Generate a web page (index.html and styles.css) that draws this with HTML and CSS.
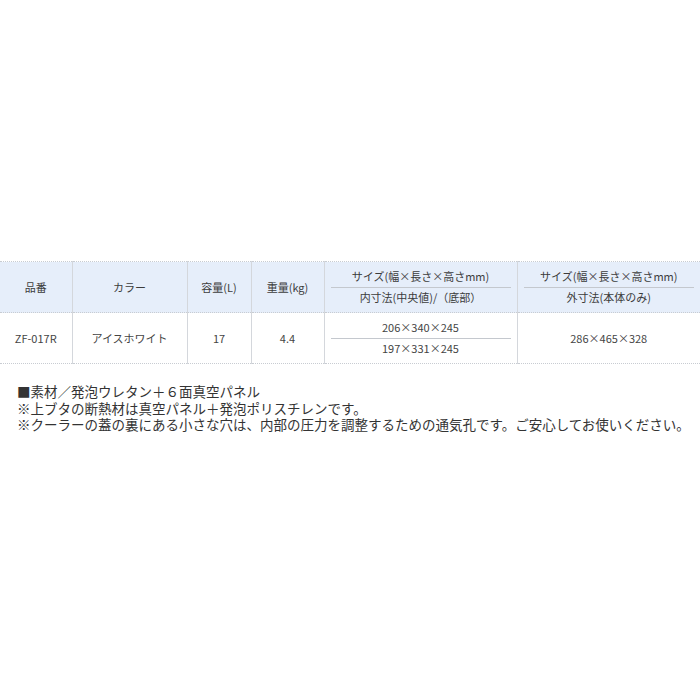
FILE: index.html
```html
<!DOCTYPE html>
<html lang="ja">
<head>
<meta charset="utf-8">
<link rel="stylesheet" href="styles.css">
</head>
<body>
<div class="page">
  <table class="spec">
    <colgroup>
      <col class="c1"><col class="c2"><col class="c3"><col class="c4"><col class="c5"><col class="c6">
    </colgroup>
    <thead>
      <tr>
        <th>品番</th>
        <th>カラー</th>
        <th>容量(L)</th>
        <th>重量(kg)</th>
        <th class="split"><div class="part">サイズ(幅×長さ×高さmm)</div><div class="part second">内寸法(中央値)/（底部）</div></th>
        <th class="split last"><div class="part">サイズ(幅×長さ×高さmm)</div><div class="part second">外寸法(本体のみ)</div></th>
      </tr>
    </thead>
    <tbody>
      <tr>
        <td>ZF-017R</td>
        <td>アイスホワイト</td>
        <td>17</td>
        <td>4.4</td>
        <td class="split"><div class="part">206×340×245</div><div class="part second">197×331×245</div></td>
        <td class="last">286×465×328</td>
      </tr>
    </tbody>
  </table>
  <div class="notes">
    <p>■素材／発泡ウレタン＋６面真空パネル</p>
    <p>※上ブタの断熱材は真空パネル＋発泡ポリスチレンです。</p>
    <p>※クーラーの蓋の裏にある小さな穴は、内部の圧力を調整するための通気孔です。ご安心してお使いください。</p>
  </div>
</div>
</body>
</html>
```
FILE: styles.css
```css
html, body {
  margin: 0;
  padding: 0;
  background: #ffffff;
}
body {
  font-family: "Noto Sans CJK JP", "Noto Sans", sans-serif;
  color: #444444;
}
.page {
  width: 700px;
  padding-top: 261px;
}
.spec {
  width: 700px;
  border-collapse: collapse;
  table-layout: fixed;
  font-size: 11px;
}
.c1 { width: 72px; }
.c2 { width: 115px; }
.c3 { width: 64px; }
.c4 { width: 73px; }
.c5 { width: 193px; }
.c6 { width: 183px; }
.spec th, .spec td {
  text-align: center;
  vertical-align: middle;
  font-weight: normal;
  border-left: 1px solid #d4d7dc;
  border-top: 1px dotted #c8ccd2;
  border-bottom: 1px dotted #c8ccd2;
  padding: 0 6px;
  line-height: 14px;
  height: 50px;
  box-sizing: border-box;
}
.spec th:first-child, .spec td:first-child {
  border-left: none;
}
.spec th {
  background: #e6eefa;
  color: #3c3c3c;
}
.spec td {
  background: #ffffff;
  color: #444444;
}
.spec .split {
  padding: 4px 6px;
}
.part {
  height: 21px;
  line-height: 20px;
  overflow: hidden;
}
.part.second {
  height: 20px;
  line-height: 19px;
  border-top: 1px solid #c4c8ce;
}
.notes {
  margin-top: 19px;
  padding-left: 17px;
  font-size: 13.5px;
  color: #333333;
}
.notes p {
  margin: 0;
  height: 16.5px;
  line-height: 16.5px;
  white-space: nowrap;
}
```
